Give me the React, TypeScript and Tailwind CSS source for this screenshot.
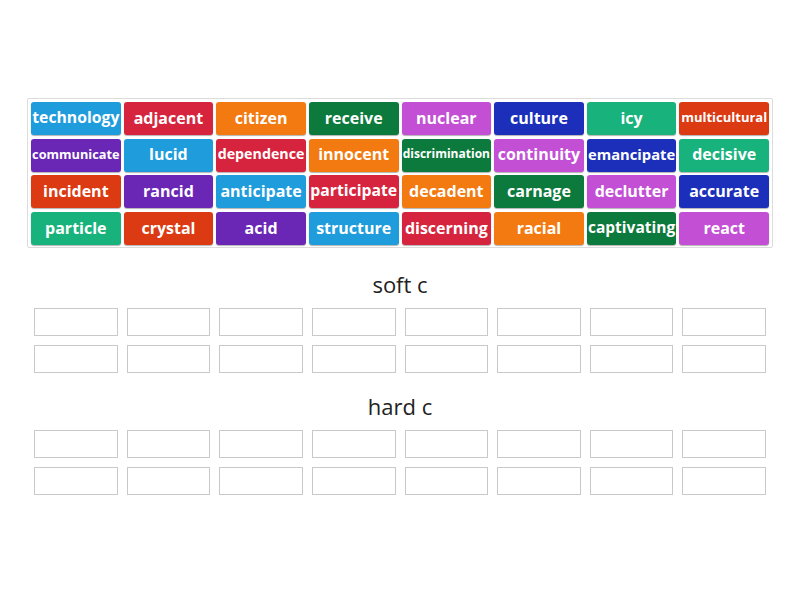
import React, { useLayoutEffect, useRef, useState } from "react";

type Tile = { w: string; c: string };

const LB = "bg-[#1e9cdc]";
const RD = "bg-[#d7243e]";
const OR = "bg-[#f27a10]";
const DG = "bg-[#0c7a3c]";
const MG = "bg-[#c34fd5]";
const DB = "bg-[#1c2fba]";
const TL = "bg-[#18b27c]";
const RO = "bg-[#db3a12]";
const PU = "bg-[#6a27b5]";

const tiles: Tile[] = [
  { w: "technology", c: LB },
  { w: "adjacent", c: RD },
  { w: "citizen", c: OR },
  { w: "receive", c: DG },
  { w: "nuclear", c: MG },
  { w: "culture", c: DB },
  { w: "icy", c: TL },
  { w: "multicultural", c: RO },
  { w: "communicate", c: PU },
  { w: "lucid", c: LB },
  { w: "dependence", c: RD },
  { w: "innocent", c: OR },
  { w: "discrimination", c: DG },
  { w: "continuity", c: MG },
  { w: "emancipate", c: DB },
  { w: "decisive", c: TL },
  { w: "incident", c: RO },
  { w: "rancid", c: PU },
  { w: "anticipate", c: LB },
  { w: "participate", c: RD },
  { w: "decadent", c: OR },
  { w: "carnage", c: DG },
  { w: "declutter", c: MG },
  { w: "accurate", c: DB },
  { w: "particle", c: TL },
  { w: "crystal", c: RO },
  { w: "acid", c: PU },
  { w: "structure", c: LB },
  { w: "discerning", c: RD },
  { w: "racial", c: OR },
  { w: "captivating", c: DG },
  { w: "react", c: MG },
];

function FitText({ text }: { text: string }) {
  const ref = useRef<HTMLSpanElement>(null);
  const [size, setSize] = useState(16);
  useLayoutEffect(() => {
    const el = ref.current;
    if (!el) return;
    let s = 16;
    el.style.fontSize = s + "px";
    while (el.scrollWidth > 87 && s > 8) {
      s -= 0.25;
      el.style.fontSize = s + "px";
    }
    setSize(s);
  }, [text]);
  return (
    <span
      ref={ref}
      className="whitespace-nowrap font-bold text-white leading-none"
      style={{ fontSize: size + "px" }}
    >
      {text}
    </span>
  );
}

function DropGrid() {
  return (
    <div className="grid grid-cols-8 gap-x-[3px] gap-y-[9px]">
      {Array.from({ length: 16 }).map((_, i) => (
        <div key={i} className="mx-[3px] h-[28px] border border-[#c9c9c9] bg-white" />
      ))}
    </div>
  );
}

export default function App() {
  return (
    <div
      className="w-[800px] h-[600px] bg-white overflow-hidden"
      style={{ fontFamily: '"Open Sans", "Noto Sans", sans-serif' }}
    >
      <div className="px-[27px] pt-[98px]">
        <div className="rounded-[2px] border border-[#dcdcdc] px-[3px] pt-[3px] pb-[2px]">
          <div className="grid grid-cols-8 gap-x-[3px] gap-y-[3.7px]">
            {tiles.map((t) => (
              <div
                key={t.w}
                className={`${t.c} flex h-[33px] items-center justify-center overflow-hidden rounded-[3px] pb-[2px] shadow-[0_1px_1px_rgba(0,0,0,0.3)]`}
              >
                <FitText text={t.w} />
              </div>
            ))}
          </div>
        </div>
      </div>
      <div className="px-[31px]">
        <div className="mt-[23px] mb-[9px] h-[28px] text-center text-[22px] leading-[26px] text-[#222]">
          soft c
        </div>
        <DropGrid />
        <div className="mt-[20px] mb-[9px] h-[28px] text-center text-[22px] leading-[26px] text-[#222]">
          hard c
        </div>
        <DropGrid />
      </div>
    </div>
  );
}
